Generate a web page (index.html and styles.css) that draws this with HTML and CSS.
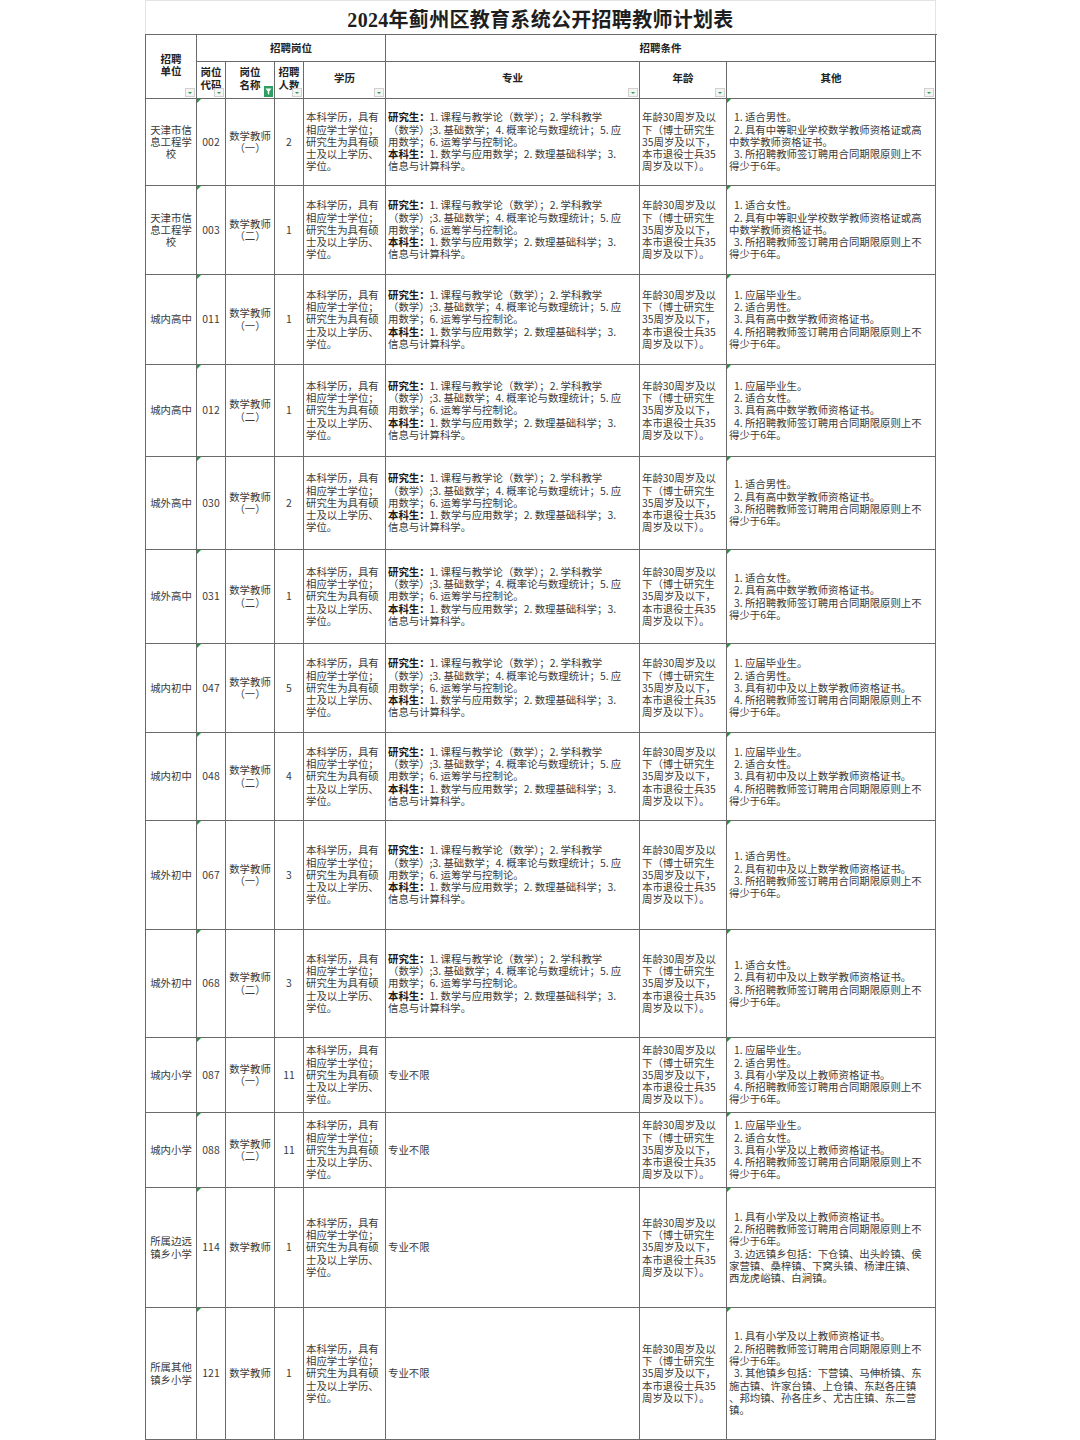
FILE: index.html
```html
<!DOCTYPE html>
<html lang="zh-CN">
<head>
<meta charset="utf-8">
<title>2024年蓟州区教育系统公开招聘教师计划表</title>
<link rel="stylesheet" href="styles.css">
</head>
<body>
<div class="sheet">
  <div class="title">2024年蓟州区教育系统公开招聘教师计划表</div>
  <table>
    <colgroup>
      <col class="c-unit"><col class="c-code"><col class="c-name"><col class="c-num">
      <col class="c-edu"><col class="c-major"><col class="c-age"><col class="c-other">
    </colgroup>
    <thead>
      <tr class="hd1">
        <th rowspan="2" class="unit-h">招聘<br>单位<span class="flt"></span></th>
        <th colspan="4">招聘岗位</th>
        <th colspan="4">招聘条件</th>
      </tr>
      <tr class="hd2">
        <th>岗位<br>代码<span class="flt"></span></th>
        <th>岗位<br>名称<span class="flt-on"><svg viewBox="0 0 9 11" width="9" height="11"><rect width="9" height="11" fill="#2f9e62"/><path d="M1.5 2.5h6L5.2 5.6v3.2L3.8 8.1V5.6z" fill="#fff"/></svg></span></th>
        <th>招聘<br>人数<span class="flt"></span></th>
        <th>学历<span class="flt"></span></th>
        <th>专业<span class="flt"></span></th>
        <th>年龄<span class="flt"></span></th>
        <th>其他<span class="flt"></span></th>
      </tr>
    </thead>
    <tbody>
      <tr class="h87">
        <td class="ctr">天津市信<br>息工程学<br>校</td>
        <td class="ctr mk">002</td>
        <td class="ctr">数学教师<br>（一）</td>
        <td class="ctr">2</td>
        <td>本科学历，具有<br>相应学士学位；<br>研究生为具有硕<br>士及以上学历、<br>学位。</td>
        <td><b>研究生：</b>1. 课程与教学论（数学）；2. 学科教学<br>（数学）;3. 基础数学；4. 概率论与数理统计；5. 应<br>用数学；6. 运筹学与控制论。<br><b>本科生：</b>1. 数学与应用数学；2. 数理基础科学；3.<br>信息与计算科学。</td>
        <td>年龄30周岁及以<br>下（博士研究生<br>35周岁及以下，<br>本市退役士兵35<br>周岁及以下）。</td>
        <td class="mk"><span class="i">1. 适合男性。</span><br><span class="i">2. 具有中等职业学校数学教师资格证或高</span><br>中数学教师资格证书。<br><span class="i">3. 所招聘教师签订聘用合同期限原则上不</span><br>得少于6年。</td>
      </tr>
      <tr class="h89">
        <td class="ctr">天津市信<br>息工程学<br>校</td>
        <td class="ctr mk">003</td>
        <td class="ctr">数学教师<br>（二）</td>
        <td class="ctr">1</td>
        <td>本科学历，具有<br>相应学士学位；<br>研究生为具有硕<br>士及以上学历、<br>学位。</td>
        <td><b>研究生：</b>1. 课程与教学论（数学）；2. 学科教学<br>（数学）;3. 基础数学；4. 概率论与数理统计；5. 应<br>用数学；6. 运筹学与控制论。<br><b>本科生：</b>1. 数学与应用数学；2. 数理基础科学；3.<br>信息与计算科学。</td>
        <td>年龄30周岁及以<br>下（博士研究生<br>35周岁及以下，<br>本市退役士兵35<br>周岁及以下）。</td>
        <td class="mk"><span class="i">1. 适合女性。</span><br><span class="i">2. 具有中等职业学校数学教师资格证或高</span><br>中数学教师资格证书。<br><span class="i">3. 所招聘教师签订聘用合同期限原则上不</span><br>得少于6年。</td>
      </tr>
      <tr class="h90">
        <td class="ctr">城内高中</td>
        <td class="ctr mk">011</td>
        <td class="ctr">数学教师<br>（一）</td>
        <td class="ctr">1</td>
        <td>本科学历，具有<br>相应学士学位；<br>研究生为具有硕<br>士及以上学历、<br>学位。</td>
        <td><b>研究生：</b>1. 课程与教学论（数学）；2. 学科教学<br>（数学）;3. 基础数学；4. 概率论与数理统计；5. 应<br>用数学；6. 运筹学与控制论。<br><b>本科生：</b>1. 数学与应用数学；2. 数理基础科学；3.<br>信息与计算科学。</td>
        <td>年龄30周岁及以<br>下（博士研究生<br>35周岁及以下，<br>本市退役士兵35<br>周岁及以下）。</td>
        <td class="mk"><span class="i">1. 应届毕业生。</span><br><span class="i">2. 适合男性。</span><br><span class="i">3. 具有高中数学教师资格证书。</span><br><span class="i">4. 所招聘教师签订聘用合同期限原则上不</span><br>得少于6年。</td>
      </tr>
      <tr class="h92">
        <td class="ctr">城内高中</td>
        <td class="ctr mk">012</td>
        <td class="ctr">数学教师<br>（二）</td>
        <td class="ctr">1</td>
        <td>本科学历，具有<br>相应学士学位；<br>研究生为具有硕<br>士及以上学历、<br>学位。</td>
        <td><b>研究生：</b>1. 课程与教学论（数学）；2. 学科教学<br>（数学）;3. 基础数学；4. 概率论与数理统计；5. 应<br>用数学；6. 运筹学与控制论。<br><b>本科生：</b>1. 数学与应用数学；2. 数理基础科学；3.<br>信息与计算科学。</td>
        <td>年龄30周岁及以<br>下（博士研究生<br>35周岁及以下，<br>本市退役士兵35<br>周岁及以下）。</td>
        <td class="mk"><span class="i">1. 应届毕业生。</span><br><span class="i">2. 适合女性。</span><br><span class="i">3. 具有高中数学教师资格证书。</span><br><span class="i">4. 所招聘教师签订聘用合同期限原则上不</span><br>得少于6年。</td>
      </tr>
      <tr class="h93">
        <td class="ctr">城外高中</td>
        <td class="ctr mk">030</td>
        <td class="ctr">数学教师<br>（一）</td>
        <td class="ctr">2</td>
        <td>本科学历，具有<br>相应学士学位；<br>研究生为具有硕<br>士及以上学历、<br>学位。</td>
        <td><b>研究生：</b>1. 课程与教学论（数学）；2. 学科教学<br>（数学）;3. 基础数学；4. 概率论与数理统计；5. 应<br>用数学；6. 运筹学与控制论。<br><b>本科生：</b>1. 数学与应用数学；2. 数理基础科学；3.<br>信息与计算科学。</td>
        <td>年龄30周岁及以<br>下（博士研究生<br>35周岁及以下，<br>本市退役士兵35<br>周岁及以下）。</td>
        <td class="mk"><span class="i">1. 适合男性。</span><br><span class="i">2. 具有高中数学教师资格证书。</span><br><span class="i">3. 所招聘教师签订聘用合同期限原则上不</span><br>得少于6年。</td>
      </tr>
      <tr class="h94">
        <td class="ctr">城外高中</td>
        <td class="ctr mk">031</td>
        <td class="ctr">数学教师<br>（二）</td>
        <td class="ctr">1</td>
        <td>本科学历，具有<br>相应学士学位；<br>研究生为具有硕<br>士及以上学历、<br>学位。</td>
        <td><b>研究生：</b>1. 课程与教学论（数学）；2. 学科教学<br>（数学）;3. 基础数学；4. 概率论与数理统计；5. 应<br>用数学；6. 运筹学与控制论。<br><b>本科生：</b>1. 数学与应用数学；2. 数理基础科学；3.<br>信息与计算科学。</td>
        <td>年龄30周岁及以<br>下（博士研究生<br>35周岁及以下，<br>本市退役士兵35<br>周岁及以下）。</td>
        <td class="mk"><span class="i">1. 适合女性。</span><br><span class="i">2. 具有高中数学教师资格证书。</span><br><span class="i">3. 所招聘教师签订聘用合同期限原则上不</span><br>得少于6年。</td>
      </tr>
      <tr class="h89">
        <td class="ctr">城内初中</td>
        <td class="ctr mk">047</td>
        <td class="ctr">数学教师<br>（一）</td>
        <td class="ctr">5</td>
        <td>本科学历，具有<br>相应学士学位；<br>研究生为具有硕<br>士及以上学历、<br>学位。</td>
        <td><b>研究生：</b>1. 课程与教学论（数学）；2. 学科教学<br>（数学）;3. 基础数学；4. 概率论与数理统计；5. 应<br>用数学；6. 运筹学与控制论。<br><b>本科生：</b>1. 数学与应用数学；2. 数理基础科学；3.<br>信息与计算科学。</td>
        <td>年龄30周岁及以<br>下（博士研究生<br>35周岁及以下，<br>本市退役士兵35<br>周岁及以下）。</td>
        <td class="mk"><span class="i">1. 应届毕业生。</span><br><span class="i">2. 适合男性。</span><br><span class="i">3. 具有初中及以上数学教师资格证书。</span><br><span class="i">4. 所招聘教师签订聘用合同期限原则上不</span><br>得少于6年。</td>
      </tr>
      <tr class="h88">
        <td class="ctr">城内初中</td>
        <td class="ctr mk">048</td>
        <td class="ctr">数学教师<br>（二）</td>
        <td class="ctr">4</td>
        <td>本科学历，具有<br>相应学士学位；<br>研究生为具有硕<br>士及以上学历、<br>学位。</td>
        <td><b>研究生：</b>1. 课程与教学论（数学）；2. 学科教学<br>（数学）;3. 基础数学；4. 概率论与数理统计；5. 应<br>用数学；6. 运筹学与控制论。<br><b>本科生：</b>1. 数学与应用数学；2. 数理基础科学；3.<br>信息与计算科学。</td>
        <td>年龄30周岁及以<br>下（博士研究生<br>35周岁及以下，<br>本市退役士兵35<br>周岁及以下）。</td>
        <td class="mk"><span class="i">1. 应届毕业生。</span><br><span class="i">2. 适合女性。</span><br><span class="i">3. 具有初中及以上数学教师资格证书。</span><br><span class="i">4. 所招聘教师签订聘用合同期限原则上不</span><br>得少于6年。</td>
      </tr>
      <tr class="h109">
        <td class="ctr">城外初中</td>
        <td class="ctr mk">067</td>
        <td class="ctr">数学教师<br>（一）</td>
        <td class="ctr">3</td>
        <td>本科学历，具有<br>相应学士学位；<br>研究生为具有硕<br>士及以上学历、<br>学位。</td>
        <td><b>研究生：</b>1. 课程与教学论（数学）；2. 学科教学<br>（数学）;3. 基础数学；4. 概率论与数理统计；5. 应<br>用数学；6. 运筹学与控制论。<br><b>本科生：</b>1. 数学与应用数学；2. 数理基础科学；3.<br>信息与计算科学。</td>
        <td>年龄30周岁及以<br>下（博士研究生<br>35周岁及以下，<br>本市退役士兵35<br>周岁及以下）。</td>
        <td class="mk"><span class="i">1. 适合男性。</span><br><span class="i">2. 具有初中及以上数学教师资格证书。</span><br><span class="i">3. 所招聘教师签订聘用合同期限原则上不</span><br>得少于6年。</td>
      </tr>
      <tr class="h108">
        <td class="ctr">城外初中</td>
        <td class="ctr mk">068</td>
        <td class="ctr">数学教师<br>（二）</td>
        <td class="ctr">3</td>
        <td>本科学历，具有<br>相应学士学位；<br>研究生为具有硕<br>士及以上学历、<br>学位。</td>
        <td><b>研究生：</b>1. 课程与教学论（数学）；2. 学科教学<br>（数学）;3. 基础数学；4. 概率论与数理统计；5. 应<br>用数学；6. 运筹学与控制论。<br><b>本科生：</b>1. 数学与应用数学；2. 数理基础科学；3.<br>信息与计算科学。</td>
        <td>年龄30周岁及以<br>下（博士研究生<br>35周岁及以下，<br>本市退役士兵35<br>周岁及以下）。</td>
        <td class="mk"><span class="i">1. 适合女性。</span><br><span class="i">2. 具有初中及以上数学教师资格证书。</span><br><span class="i">3. 所招聘教师签订聘用合同期限原则上不</span><br>得少于6年。</td>
      </tr>
      <tr class="h75">
        <td class="ctr">城内小学</td>
        <td class="ctr mk">087</td>
        <td class="ctr">数学教师<br>（一）</td>
        <td class="ctr">11</td>
        <td>本科学历，具有<br>相应学士学位；<br>研究生为具有硕<br>士及以上学历、<br>学位。</td>
        <td>专业不限</td>
        <td>年龄30周岁及以<br>下（博士研究生<br>35周岁及以下，<br>本市退役士兵35<br>周岁及以下）。</td>
        <td class="mk"><span class="i">1. 应届毕业生。</span><br><span class="i">2. 适合男性。</span><br><span class="i">3. 具有小学及以上教师资格证书。</span><br><span class="i">4. 所招聘教师签订聘用合同期限原则上不</span><br>得少于6年。</td>
      </tr>
      <tr class="h75">
        <td class="ctr">城内小学</td>
        <td class="ctr mk">088</td>
        <td class="ctr">数学教师<br>（二）</td>
        <td class="ctr">11</td>
        <td>本科学历，具有<br>相应学士学位；<br>研究生为具有硕<br>士及以上学历、<br>学位。</td>
        <td>专业不限</td>
        <td>年龄30周岁及以<br>下（博士研究生<br>35周岁及以下，<br>本市退役士兵35<br>周岁及以下）。</td>
        <td class="mk"><span class="i">1. 应届毕业生。</span><br><span class="i">2. 适合女性。</span><br><span class="i">3. 具有小学及以上教师资格证书。</span><br><span class="i">4. 所招聘教师签订聘用合同期限原则上不</span><br>得少于6年。</td>
      </tr>
      <tr class="h120">
        <td class="ctr">所属边远<br>镇乡小学</td>
        <td class="ctr mk">114</td>
        <td class="ctr">数学教师</td>
        <td class="ctr">1</td>
        <td>本科学历，具有<br>相应学士学位；<br>研究生为具有硕<br>士及以上学历、<br>学位。</td>
        <td>专业不限</td>
        <td>年龄30周岁及以<br>下（博士研究生<br>35周岁及以下，<br>本市退役士兵35<br>周岁及以下）。</td>
        <td class="mk"><span class="i">1. 具有小学及以上教师资格证书。</span><br><span class="i">2. 所招聘教师签订聘用合同期限原则上不</span><br>得少于6年。<br><span class="i">3. 边远镇乡包括：下仓镇、出头岭镇、侯</span><br>家营镇、桑梓镇、下窝头镇、杨津庄镇、<br>西龙虎峪镇、白涧镇。</td>
      </tr>
      <tr class="h132">
        <td class="ctr">所属其他<br>镇乡小学</td>
        <td class="ctr mk">121</td>
        <td class="ctr">数学教师</td>
        <td class="ctr">1</td>
        <td>本科学历，具有<br>相应学士学位；<br>研究生为具有硕<br>士及以上学历、<br>学位。</td>
        <td>专业不限</td>
        <td>年龄30周岁及以<br>下（博士研究生<br>35周岁及以下，<br>本市退役士兵35<br>周岁及以下）。</td>
        <td class="mk"><span class="i">1. 具有小学及以上教师资格证书。</span><br><span class="i">2. 所招聘教师签订聘用合同期限原则上不</span><br>得少于6年。<br><span class="i">3. 其他镇乡包括：下营镇、马伸桥镇、东</span><br>施古镇、许家台镇、上仓镇、东赵各庄镇<br>、邦均镇、孙各庄乡、尤古庄镇、东二营<br>镇。</td>
      </tr>
    </tbody>
  </table>
</div>
</body>
</html>
```
FILE: styles.css
```css
html, body {
  margin: 0;
  padding: 0;
  background: #ffffff;
}

body {
  font-family: "Noto Sans CJK SC", sans-serif;
  color: #3a3a3a;
}

.sheet {
  margin-left: 145px;
  width: 791px;
}

.title {
  height: 34px;
  box-sizing: border-box;
  border: 1px solid #e4e4e4;
  border-bottom: none;
  display: flex;
  align-items: center;
  justify-content: center;
  padding-top: 2px;
  font-family: "Liberation Serif", "Noto Sans CJK SC", serif;
  font-weight: bold;
  font-size: 20px;
  color: #1e1e1e;
  letter-spacing: 0.3px;
}

table {
  border-collapse: collapse;
  table-layout: fixed;
  width: 791px;
  font-size: 10.4px;
  line-height: 12.3px;
}

.c-unit { width: 51px; }
.c-code { width: 29px; }
.c-name { width: 49px; }
.c-num { width: 29px; }
.c-edu { width: 82px; }
.c-major { width: 254px; }
.c-age { width: 87px; }
.c-other { width: 209px; }

th, td {
  border: 1px solid #6a6a6a;
  padding: 0 0 0 2px;
  vertical-align: middle;
  text-align: left;
  white-space: nowrap;
  overflow: hidden;
  position: relative;
}

th {
  font-weight: bold;
  text-align: center;
  color: #222;
  font-size: 10.5px;
  line-height: 12.5px;
  padding: 0;
}

.hd1 { height: 27px; }
.hd2 { height: 37px; }
.hd2 th { padding-bottom: 3px; }
.unit-h { padding-bottom: 3px; }

td.ctr {
  text-align: center;
  padding: 0;
}

td b {
  font-weight: bold;
  color: #1a1a1a;
}

.i {
  margin-left: 5px;
}

.flt {
  position: absolute;
  right: 1px;
  bottom: 1px;
  width: 8px;
  height: 7px;
  background: #f4f4f4;
  border: 1px solid #d0d0d0;
}

.flt::after {
  content: "";
  position: absolute;
  left: 2px;
  top: 3px;
  border-left: 2px solid transparent;
  border-right: 2px solid transparent;
  border-top: 2px solid #2a9a55;
}

.flt-on {
  position: absolute;
  right: 1px;
  bottom: 1px;
  width: 9px;
  height: 11px;
  line-height: 0;
}

.mk::before {
  content: "";
  position: absolute;
  left: 0;
  top: 0;
  border-top: 4px solid #1f9a3a;
  border-right: 4px solid transparent;
}

.h75 { height: 75px; }
.h87 { height: 87px; }
.h88 { height: 88px; }
.h89 { height: 89px; }
.h90 { height: 90px; }
.h92 { height: 92px; }
.h93 { height: 93px; }
.h94 { height: 94px; }
.h108 { height: 108px; }
.h109 { height: 109px; }
.h120 { height: 120px; }
.h132 { height: 132px; }
```
